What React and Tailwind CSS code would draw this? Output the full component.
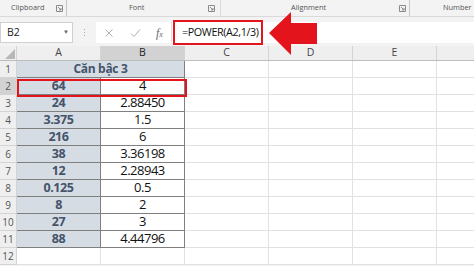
import React from 'react';

const data = [
  ['64', '4'],
  ['24', '2.88450'],
  ['3.375', '1.5'],
  ['216', '6'],
  ['38', '3.36198'],
  ['12', '2.28943'],
  ['0.125', '0.5'],
  ['8', '2'],
  ['27', '3'],
  ['88', '4.44796'],
];

const Launcher = () => (
  <svg width="7" height="7" viewBox="0 0 7 7" className="shrink-0">
    <path d="M0.5 0.5h6v6h-6z" fill="none" stroke="#8a8a8a" strokeWidth="1" />
    <path d="M2 2l3 3M5 3v2H3" fill="none" stroke="#8a8a8a" strokeWidth="1" />
  </svg>
);

const RowHead = ({ n, active }) => (
  <div
    className={`w-[17px] shrink-0 h-full flex items-center justify-center text-[10px] text-[#555] border-r border-b border-[#d4d4d4] ${
      active ? 'bg-[#d2d2d2]' : 'bg-[#efefef]'
    }`}
  >
    {n}
  </div>
);

const Empty = () => (
  <div className="w-[84px] shrink-0 h-full border-r border-b border-[#e1e1e1] bg-white" />
);

const App = () => {
  return (
    <div
      className="relative w-[474px] h-[266px] overflow-hidden bg-[#f3f3f3] select-none"
      style={{ fontFamily: '"Open Sans", "Noto Sans", sans-serif' }}
    >
      {/* ribbon group labels */}
      <div className="flex h-[17px] text-[7.4px] text-[#555] border-b border-[#d9d9d9]">
        <div className="w-[67px] flex items-center pl-[11px] pr-[3px] justify-between border-r border-[#c8c8c8]">
          <span>Clipboard</span>
          <Launcher />
        </div>
        <div className="w-[154px] flex items-center pl-[62px] pr-[5px] justify-between border-r border-[#dcdcdc]">
          <span>Font</span>
          <Launcher />
        </div>
        <div className="w-[189px] flex items-center pl-[70px] pr-[3px] justify-between border-r border-[#c8c8c8]">
          <span>Alignment</span>
          <Launcher />
        </div>
        <div className="flex-1 flex items-center pl-[33px]">
          <span>Number</span>
        </div>
      </div>

      {/* formula bar */}
      <div className="mt-[5px] h-[21px] flex items-stretch">
        <div className="w-[73px] bg-white border border-[#d0d0d0] flex items-center justify-between pl-[6px] pr-[3px] text-[10.5px] text-[#222]">
          <span>B2</span>
          <span className="text-[6px] text-[#666]">▼</span>
        </div>
        <div className="w-[23px] flex items-center justify-center">
          <div className="flex flex-col gap-[2px]">
            <span className="w-[1px] h-[1px] bg-[#aaa]" />
            <span className="w-[1px] h-[1px] bg-[#aaa]" />
            <span className="w-[1px] h-[1px] bg-[#aaa]" />
          </div>
        </div>
        <div className="w-[75px] bg-white flex items-center">
          <svg width="10" height="10" viewBox="0 0 10 10" className="ml-[8px]">
            <path d="M1.5 1.5l7 7M8.5 1.5l-7 7" stroke="#b0b0b0" strokeWidth="1" />
          </svg>
          <svg width="11" height="10" viewBox="0 0 11 10" className="ml-[16px]">
            <path d="M1 5.5l3 3 6-7" stroke="#b0b0b0" strokeWidth="1" fill="none" />
          </svg>
          <span
            className="ml-[15px] text-[12px] italic text-[#6a6a6a]"
            style={{ fontFamily: '"Liberation Serif", serif' }}
          >
            f<span className="text-[8px]">x</span>
          </span>
        </div>
        <div className="flex-1 bg-white flex items-center border-l border-[#e0e0e0] pl-[10px] text-[10.8px] tracking-[-0.4px] text-[#111]">
          =POWER(A2,1/3)
        </div>
      </div>

      {/* column headers */}
      <div className="mt-[3px] h-[15px] flex text-[10.5px] text-[#444] border-b border-[#bdbdbd]">
        <div className="w-[17px] shrink-0 bg-[#efefef] border-r border-[#d4d4d4] relative">
          <svg width="10" height="10" viewBox="0 0 10 10" className="absolute right-[1px] bottom-[1px]">
            <path d="M10 0v10H0z" fill="#b8b8b8" />
          </svg>
        </div>
        {['A', 'B', 'C', 'D', 'E', ''].map((c) => (
          <div
            key={c || 'f'}
            className={`w-[84px] shrink-0 flex items-center justify-center border-r border-[#d4d4d4] ${
              c === 'B' ? 'bg-[#d2d2d2] text-[#222]' : 'bg-[#efefef]'
            }`}
          >
            {c}
          </div>
        ))}
      </div>

      {/* row 1 */}
      <div className="h-[17px] flex">
        <RowHead n="1" />
        <div className="w-[168px] shrink-0 h-full bg-[#d6dce4] border-r border-b border-[#7f7f7f] flex items-center justify-center text-[12px] tracking-[-0.3px] font-bold text-[#44546a]">
          Căn bậc 3
        </div>
        <Empty />
        <Empty />
        <Empty />
        <Empty />
      </div>

      {data.map(([a, b], i) => (
        <div key={i} className="h-[17px] flex">
          <RowHead n={i + 2} active={i === 0} />
          <div className="w-[84px] shrink-0 h-full bg-[#d6dce4] border-r border-b border-[#7f7f7f] flex items-center justify-center text-[12.5px] tracking-[-0.4px] font-bold text-[#44546a]">
            {a}
          </div>
          <div className="w-[84px] shrink-0 h-full bg-white border-r border-b border-[#7f7f7f] flex items-center justify-center text-[13px] tracking-[-0.5px] text-[#111]">
            {b}
          </div>
          <Empty />
          <Empty />
          <Empty />
          <Empty />
        </div>
      ))}

      <div className="h-[17px] flex">
        <RowHead n="12" />
        <Empty />
        <Empty />
        <Empty />
        <Empty />
        <Empty />
        <Empty />
      </div>

      {/* annotations */}
      <div className="absolute left-[173px] top-[20px] w-[90px] h-[25px] border-2 border-[#e3141c] pointer-events-none" />
      <div className="absolute left-[17px] top-[79px] w-[170px] h-[18px] border-2 border-[#e3141c] pointer-events-none" />
      <svg
        className="absolute left-[266px] top-[10px]"
        width="54"
        height="48"
        viewBox="0 0 54 48"
      >
        <polygon points="3,23 25,2 25,13 51,13 51,34 25,34 25,45" fill="#e3141c" />
      </svg>
    </div>
  );
};

export default App;
